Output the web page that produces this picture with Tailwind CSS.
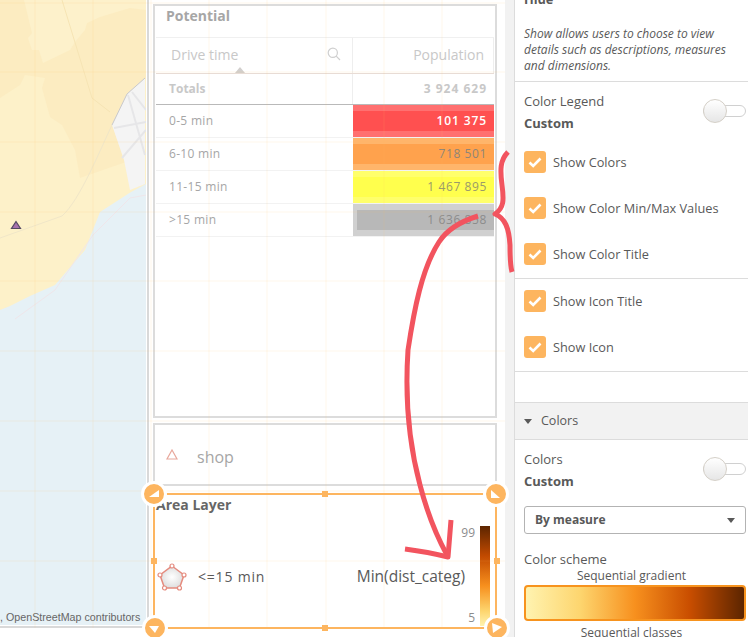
<!DOCTYPE html>
<html lang="en">
<head>
    <meta charset="UTF-8">
    <title>Map sheet edit</title>
    <script src="https://cdn.jsdelivr.net/npm/@tailwindcss/browser@4"></script>
</head>
<body class="bg-white">
    <div class="relative flex w-[748px] h-[637px] overflow-hidden bg-white font-['Open_Sans',sans-serif] text-[#595959]">

        <!-- sheet -->
        <div class="flex w-[505px] h-[637px] shrink-0">
            <!-- map -->
            <div class="w-[149px] h-[628px] shrink-0 border-r-2 border-b-2 border-[#d9d9d9] pr-px pb-px">
                <div class="relative w-full h-full overflow-hidden bg-[#e6f1f6]">
                    <svg class="block" width="146" height="625" viewBox="0 0 146 625">
                        <polygon fill="#fdf1c9" points="0,0 146,0 146,184 131,192 100,212 85,250 55,285 30,296 10,306 0,310"/>
                        <polygon fill="#fcecc1" points="0,0 146,0 146,78 127,94 112,125 126,162 80,178 75,150 62,125 50,117 42,88 45,78 25,75 20,85 0,98"/>
                        <polygon fill="#fdf1cb" points="28,38 32,50 39,50 43,63 70,50 75,42 85,30 87,23 100,17 130,8 146,10 146,0 24,0 32,33"/>
                        <polygon fill="#f4f4f4" points="145,78 127,94 112,125 124,160 130,190 145,184"/>
                        <path d="M127 94 L145 78 M127 94 L112 125" fill="none" stroke="#c9c9cc" stroke-width="1"/>
                        <path d="M128 95 L145 155 M114 128 L146 122 M122 158 L146 130 M132 92 L146 110" fill="none" stroke="#e6e6e8" stroke-width="2"/>
                        <path d="M0 238 L62 216 C80 200 100 150 112 125" fill="none" stroke="#f0e6c8" stroke-width="1"/>
                        <path d="M62 0 L92 98 L110 112" fill="none" stroke="#f6e4b4" stroke-width="1"/>
                        <path d="M15 319 L55 290 L93 235 L130 198 L146 195" fill="none" stroke="#efe6ea" stroke-width="1"/>
                        <polygon fill="#a671ad" stroke="#544a63" stroke-width="1.2" points="16,221.500 11.500,228.500 20.500,228.500"/>
                    </svg>
                    <span class="absolute left-[6px] top-[610px] text-[10.700px] leading-[14px] whitespace-nowrap text-[#666] font-['Liberation_Sans',sans-serif]">OpenStreetMap contributors</span>
                    <span class="absolute left-0 top-[610px] text-[10.700px] leading-[14px] text-[#666] font-['Liberation_Sans',sans-serif]">,</span>
                </div>
            </div>

            <!-- objects column -->
            <div class="ml-[4px] w-[344px] pt-[4px] flex flex-col shrink-0">
                <!-- potential table -->
                <section class="h-[414px] border-2 border-[#dcdcdc] px-px">
                    <h2 class="h-[31px] pl-[10px] pt-[1px] text-[14px] leading-[18px] font-bold text-[#a6a6a6]">Potential</h2>
                    <div class="text-[12px] text-[#a6a6a6]">
                        <div class="flex h-[37px] border-y border-[#f0f0f0] border-b-[#e8dcd5] text-[14px] text-[#c8c8c8]">
                            <div class="relative w-[197px] flex items-center justify-between border-r border-[#eeeeee] pl-[15px] pr-[11px] pb-[3px]">
                                <span>Drive time</span>
                                <svg width="14" height="14" viewBox="0 0 14 14" fill="none" stroke="#cfcfcf" stroke-width="1.2"><circle cx="5.800" cy="5.800" r="4.600"/><path d="M9.200 9.200 L13 13"/></svg>
                                <span class="absolute left-[79px] bottom-0 w-0 h-0 border-x-[5px] border-x-transparent border-b-[6px] border-b-[#d2cfcd]"></span>
                            </div>
                            <div class="flex-1 flex items-center justify-end pr-[9px] border-r border-[#eeeeee] pb-[3px]">Population</div>
                        </div>
                        <div class="flex h-[31px] items-center border-b border-[#b9b9b9] font-bold text-[#c8c8c8]">
                            <div class="w-[197px] pl-[13px] border-r border-[#eeeeee] h-full flex items-center">Totals</div>
                            <div class="flex-1 text-right pr-[7px] tracking-[1px]">3 924 629</div>
                        </div>
                        <div class="flex h-[33px] border-b border-[#f2f2f2]">
                            <div class="w-[197px] pl-[13px] flex items-center tracking-[0.3px]">0-5 min</div>
                            <div class="flex-1 flex items-center justify-end pr-[7px] border-y-[6px] border-[#ff7070] bg-[#ff5050] text-white font-semibold tracking-[0.9px]">101 375</div>
                        </div>
                        <div class="flex h-[33px] border-b border-[#f2f2f2]">
                            <div class="w-[197px] pl-[13px] flex items-center tracking-[0.3px]">6-10 min</div>
                            <div class="flex-1 flex items-center justify-end pr-[7px] border-y-[6px] border-[#ffb56b] bg-[#ffa24d] text-[#8f8578] tracking-[0.6px]">718 501</div>
                        </div>
                        <div class="flex h-[33px] border-b border-[#f2f2f2]">
                            <div class="w-[197px] pl-[13px] flex items-center tracking-[0.3px]">11-15 min</div>
                            <div class="flex-1 flex items-center justify-end pr-[7px] border-y-[6px] border-[#ffff6b] bg-[#ffff4d] text-[#9a9a6a] tracking-[0.6px]">1 467 895</div>
                        </div>
                        <div class="flex h-[33px] border-b border-[#f2f2f2]">
                            <div class="w-[197px] pl-[13px] flex items-center tracking-[0.3px]">&gt;15 min</div>
                            <div class="flex-1 flex items-center justify-end pr-[7px] border-y-[6px] border-l-4 border-[#d0d0d0] bg-[#b8b8b8] text-[#8c8c8c] tracking-[0.6px]">1 636 858</div>
                        </div>
                    </div>
                </section>

                <!-- shop legend -->
                <section class="mt-[5px] h-[63px] border-2 border-[#dcdcdc] flex items-center pl-[11px] pt-[4px] text-[#a6a6a6] text-[16px]">
                    <svg class="-mt-[5px]" width="12" height="11" viewBox="0 0 12 11" fill="none" stroke="#e8a89c" stroke-width="1.2"><polygon points="6,1 1,10 11,10"/></svg>
                    <span class="ml-[19px]">shop</span>
                </section>

                <!-- area layer, selected -->
                <section class="mt-[7px] h-[136px] border-2 border-[#fdb55f] relative">
                    <h2 class="pl-[1px] pt-[1px] h-[21px] text-[14px] leading-[18px] font-bold text-[#666]">Area Layer</h2>
                    <div class="flex items-center h-[98px] pt-[23px] pl-[2px] pr-[5px]">
                        <svg width="30" height="28" viewBox="0 0 30 28">
                            <defs><radialGradient id="pent"><stop offset="0" stop-color="#fff"/><stop offset="1" stop-color="#dedede"/></radialGradient></defs>
                            <polygon points="15,3 27,12 22.500,25 7.500,25 3,12" fill="url(#pent)" stroke="#e58b7e" stroke-width="1.5"/>
                            <g fill="#fff" stroke="#e58b7e" stroke-width="1.2"><circle cx="15" cy="3" r="2"/><circle cx="27" cy="12" r="2"/><circle cx="22.500" cy="25" r="2"/><circle cx="7.500" cy="25" r="2"/><circle cx="3" cy="12" r="2"/></g>
                        </svg>
                        <span class="ml-[11px] text-[14px] tracking-[0.8px] text-[#595959]">&lt;=15 min</span>
                        <span class="ml-auto text-[15.500px] text-[#595959]">Min(dist_categ)</span>
                        <div class="flex flex-col justify-between h-[99px] w-[10px] text-[12px] leading-[14px] text-[#8c8c8c] items-end -mt-[2px]">
                            <span>99</span>
                            <span>5</span>
                        </div>
                        <div class="ml-[5px] w-[10px] h-[100px] -mt-[2px] shrink-0 bg-[linear-gradient(to_bottom,#5c2500,#c24a00_30%,#f7901e_60%,#fdd56e_85%,#fff3b0)]"></div>
                    </div>
                </section>
            </div>
            <div class="flex-1"></div>
        </div>

        <!-- gutter -->
        <div class="w-[9px] shrink-0 bg-[#f2f2f2]"></div>

        <!-- properties panel -->
        <aside class="w-[234px] shrink-0 border-l border-[#dcdcdc] bg-white text-[12.750px] leading-[16px] text-[#595959]">
            <div class="h-[82px] border-b border-[#dcdcdc] px-[9px] overflow-hidden">
                <p class="-mt-[9px] font-bold">Hide</p>
                <p class="mt-[19px] italic text-[12px]">Show allows users to choose to view details such as descriptions, measures and dimensions.</p>
            </div>

            <div class="pl-[9px] pr-[2px] pt-[11px] flex justify-between">
                <div>
                    <p class="text-[13px]">Color Legend</p>
                    <p class="mt-[6px] font-bold text-[13px]">Custom</p>
                </div>
                <div class="mt-[12px] flex items-center w-[43px] h-[12px] border border-[#d0d0d0] rounded-full bg-white">
                    <span class="-ml-px w-[24px] h-[24px] shrink-0 rounded-full border border-[#d5d0c8] bg-gradient-to-b from-white to-[#e6e6e6]"></span>
                </div>
            </div>

            <ul class="h-[148px] border-b border-[#dcdcdc] px-[9px] pt-[20px] flex flex-col gap-[24px]">
                <li class="flex items-center gap-[7px]">
                    <span class="w-[22px] h-[22px] rounded-[3px] bg-[#fdb55f] flex items-center justify-center"><svg width="14" height="11" viewBox="0 0 14 11" fill="none" stroke="#fff" stroke-width="2.600"><path d="M1.500 5.500 L5.200 9 L12.500 1.500"/></svg></span>
                    <span>Show Colors</span>
                </li>
                <li class="flex items-center gap-[7px]">
                    <span class="w-[22px] h-[22px] rounded-[3px] bg-[#fdb55f] flex items-center justify-center"><svg width="14" height="11" viewBox="0 0 14 11" fill="none" stroke="#fff" stroke-width="2.600"><path d="M1.500 5.500 L5.200 9 L12.500 1.500"/></svg></span>
                    <span>Show Color Min/Max Values</span>
                </li>
                <li class="flex items-center gap-[7px]">
                    <span class="w-[22px] h-[22px] rounded-[3px] bg-[#fdb55f] flex items-center justify-center"><svg width="14" height="11" viewBox="0 0 14 11" fill="none" stroke="#fff" stroke-width="2.600"><path d="M1.500 5.500 L5.200 9 L12.500 1.500"/></svg></span>
                    <span>Show Color Title</span>
                </li>
            </ul>

            <ul class="h-[93px] border-b border-[#dcdcdc] px-[9px] pt-[11px] flex flex-col gap-[24px]">
                <li class="flex items-center gap-[7px]">
                    <span class="w-[22px] h-[22px] rounded-[3px] bg-[#fdb55f] flex items-center justify-center"><svg width="14" height="11" viewBox="0 0 14 11" fill="none" stroke="#fff" stroke-width="2.600"><path d="M1.500 5.500 L5.200 9 L12.500 1.500"/></svg></span>
                    <span>Show Icon Title</span>
                </li>
                <li class="flex items-center gap-[7px]">
                    <span class="w-[22px] h-[22px] rounded-[3px] bg-[#fdb55f] flex items-center justify-center"><svg width="14" height="11" viewBox="0 0 14 11" fill="none" stroke="#fff" stroke-width="2.600"><path d="M1.500 5.500 L5.200 9 L12.500 1.500"/></svg></span>
                    <span>Show Icon</span>
                </li>
            </ul>

            <div class="mt-[30px] h-[38px] bg-[#f2f2f2] border-y border-[#dcdcdc] flex items-center pl-[9px] text-[12.500px]">
                <span class="w-0 h-0 border-x-[4px] border-x-transparent border-t-[5px] border-t-[#595959]"></span>
                <span class="ml-[9px]">Colors</span>
            </div>

            <div class="pl-[9px] pr-[2px] pt-[11px] flex justify-between">
                <div>
                    <p class="text-[13px]">Colors</p>
                    <p class="mt-[6px] font-bold text-[13px]">Custom</p>
                </div>
                <div class="mt-[12px] flex items-center w-[43px] h-[12px] border border-[#d0d0d0] rounded-full bg-white">
                    <span class="-ml-px w-[24px] h-[24px] shrink-0 rounded-full border border-[#d5d0c8] bg-gradient-to-b from-white to-[#e6e6e6]"></span>
                </div>
            </div>

            <div class="ml-[9px] mr-[2px] mt-[17px] h-[28px] flex items-center justify-between border border-[#b3b3b3] rounded-[3px] pl-[10px] pr-[10px] font-bold text-[12px]">
                <span>By measure</span>
                <span class="w-0 h-0 border-x-[4px] border-x-transparent border-t-[5px] border-t-[#595959]"></span>
            </div>

            <p class="mx-[9px] mt-[17px] text-[13px]">Color scheme</p>
            <p class="text-center text-[12px] leading-[16px] mt-[1px]">Sequential gradient</p>
            <div class="ml-[9px] mr-[2px] mt-[1px] h-[36px] rounded-[4px] border-2 border-[#f7931e] bg-[linear-gradient(to_right,#fff3b0,#fdd56e_25%,#f7901e_50%,#c94e00_75%,#5c2500)]"></div>
            <p class="text-center text-[12px] leading-[16px] mt-[4px]">Sequential classes</p>
        </aside>

        <!-- sheet grid + selection handles + hand drawn annotation -->
        <svg class="absolute left-0 top-0 pointer-events-none" width="748" height="637" viewBox="0 0 748 637">
            <g stroke="#fcb668" stroke-opacity="0.13" stroke-width="1">
                <path d="M35 0V628M93 0V628M151 0V628M209 0V628M267 0V628M326 0V628M384 0V628M442 0V628"/>
                <path d="M0 3H505M0 72H505M0 142H505M0 212H505M0 281H505M0 351H505M0 421H505M0 491H505M0 561H505"/>
            </g>
            <g fill="#fdb55f">
                <rect x="322" y="491" width="6" height="6"/>
                <rect x="322" y="625" width="6" height="6"/>
                <rect x="151" y="558" width="6" height="6"/>
                <rect x="494" y="558" width="6" height="6"/>
            </g>
            <g stroke="#fff" stroke-width="3" fill="#fdb55f">
                <circle cx="154" cy="494" r="11.500"/>
                <circle cx="496" cy="494" r="11.500"/>
                <circle cx="155" cy="628" r="11.500"/>
                <circle cx="497" cy="628" r="11.500"/>
            </g>
            <g fill="#fff">
                <polygon points="149,497 159,497 159,490"/>
                <polygon points="491,490 491,498 500,498"/>
                <polygon points="149,626 159,626 155,633"/>
                <polygon points="492,623 502,627 493,633"/>
            </g>
            <g fill="none" stroke="#f2545f" stroke-width="5" stroke-linejoin="round" stroke-linecap="butt">
                <path d="M478 216 C462 221 448 228 439 242 C422 268 414 310 408 350 C405 395 408 440 420 485 C427 512 436 535 447 555"/>
                <path d="M451 520 L448 557 C432 553 420 551 405 549" />
                <path d="M508 152 C500 160 500 170 502 185 C504 200 504 208 495 214 C505 218 509 228 510 245 C510 258 510 265 512 272"/>
            </g>
        </svg>
    </div>
</body>
</html>
